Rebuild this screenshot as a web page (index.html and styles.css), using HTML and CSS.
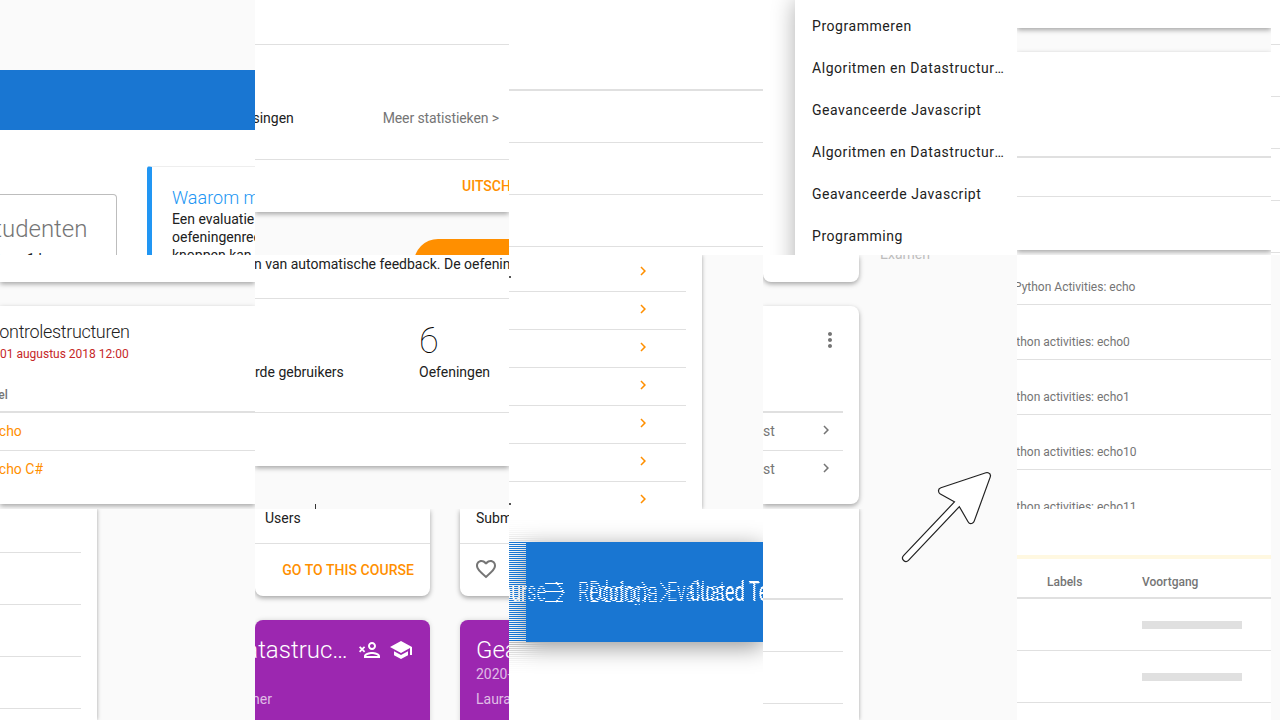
FILE: index.html
```html
<!DOCTYPE html>
<html lang="nl">
<head>
    <meta charset="UTF-8">
    <meta name="viewport" content="width=device-width, initial-scale=1.0">
    <title>Dodona</title>
    <link rel="stylesheet" href="styles.css">
</head>
<body>
<div class="collage">

    <!-- rij 1 -->
    <div class="tile">
        <div class="grey-top"></div>
        <div class="blue-band"></div>
        <div class="intro">
            <div class="outlined">
                <div class="outlined-title">Studenten</div>
                <div class="outlined-text">minstens 1 keer</div>
            </div>
            <div class="callout">
                <h3>Waarom moet ik</h3>
                <p>Een evaluatie<br>oefeningenreeks<br>knoppen kan</p>
            </div>
        </div>
    </div>

    <div class="tile">
        <div class="card stat-card">
            <div class="line-row h45"></div>
            <div class="stat-head">
                <span class="cut-oplos">oplossingen</span>
                <span class="muted more">Meer statistieken &gt;</span>
            </div>
            <div class="stat-foot">UITSCHRIJVEN</div>
        </div>
        <div class="orange-btn"></div>
    </div>

    <div class="tile white">
        <div class="line-row h91 thick"></div>
        <div class="line-row h52"></div>
        <div class="line-row h52"></div>
        <div class="line-row h52"></div>
    </div>

    <div class="tile white">
        <ul class="menu">
            <li>Programmeren</li>
            <li>Algoritmen en Datastructuren</li>
            <li>Geavanceerde Javascript</li>
            <li>Algoritmen en Datastructuren</li>
            <li>Geavanceerde Javascript</li>
            <li>Programming</li>
        </ul>
    </div>

    <div class="tile">
        <div class="card h28"></div>
        <div class="card gap24 h198">
            <div class="line-row h106 thick"></div>
            <div class="line-row h39"></div>
        </div>
    </div>

    <div class="tile white">
        <div class="line-row h45"></div>
        <div class="line-row h52"></div>
        <div class="line-row h52"></div>
        <div class="line-row h52"></div>
        <div class="line-row h52"></div>
    </div>

    <!-- rij 2 -->
    <div class="tile">
        <div class="card h27"></div>
        <div class="card gap24 h198">
            <div class="series-title">Controlestructuren</div>
            <div class="series-date">01 augustus 2018 12:00</div>
            <div class="table-head"><span class="cut-titel">Titel</span></div>
            <div class="table-row orange"><span class="cut-echo">Echo</span></div>
            <div class="table-row orange last"><span class="cut-echo">Echo C#</span></div>
        </div>
    </div>

    <div class="tile">
        <div class="card h211">
            <div class="line-row h44 intro-line">n van automatische feedback. De oefeningen</div>
            <div class="line-row h114 stats">
                <div class="stat-col">rde gebruikers</div>
                <div class="stat-col">
                    <div class="stat-num">6</div>
                    Oefeningen
                </div>
            </div>
        </div>
        <div class="tick"></div>
    </div>

    <div class="tile">
        <div class="side-panel">
            <div class="chev-row first"><span class="dot"></span><svg class="chev" viewBox="0 0 24 24"><path d="M10 6 8.59 7.41 13.17 12l-4.58 4.59L10 18l6-6z"/></svg></div>
            <div class="chev-row"><svg class="chev" viewBox="0 0 24 24"><path d="M10 6 8.59 7.41 13.17 12l-4.58 4.59L10 18l6-6z"/></svg></div>
            <div class="chev-row"><svg class="chev" viewBox="0 0 24 24"><path d="M10 6 8.59 7.41 13.17 12l-4.58 4.59L10 18l6-6z"/></svg></div>
            <div class="chev-row"><svg class="chev" viewBox="0 0 24 24"><path d="M10 6 8.59 7.41 13.17 12l-4.58 4.59L10 18l6-6z"/></svg></div>
            <div class="chev-row"><svg class="chev" viewBox="0 0 24 24"><path d="M10 6 8.59 7.41 13.17 12l-4.58 4.59L10 18l6-6z"/></svg></div>
            <div class="chev-row"><svg class="chev" viewBox="0 0 24 24"><path d="M10 6 8.59 7.41 13.17 12l-4.58 4.59L10 18l6-6z"/></svg></div>
            <div class="chev-row"><span class="dot"></span><svg class="chev" viewBox="0 0 24 24"><path d="M10 6 8.59 7.41 13.17 12l-4.58 4.59L10 18l6-6z"/></svg></div>
        </div>
    </div>

    <div class="tile split">
        <div class="split-left">
            <div class="card round-b h27"></div>
            <div class="card round-r gap24 h198">
                <svg class="kebab" viewBox="0 0 24 24"><path d="M12 8c1.1 0 2-.9 2-2s-.9-2-2-2-2 .9-2 2 .9 2 2 2zm0 2c-1.1 0-2 .9-2 2s.9 2 2 2 2-.9 2-2-.9-2-2-2zm0 6c-1.1 0-2 .9-2 2s.9 2 2 2 2-.9 2-2-.9-2-2-2z"/></svg>
                <div class="mini-table">
                    <div class="mini-row"><span class="cut-test">Test</span><svg class="chev grey" viewBox="0 0 24 24"><path d="M10 6 8.59 7.41 13.17 12l-4.58 4.59L10 18l6-6z"/></svg></div>
                    <div class="mini-row last"><span class="cut-test">Test</span><svg class="chev grey" viewBox="0 0 24 24"><path d="M10 6 8.59 7.41 13.17 12l-4.58 4.59L10 18l6-6z"/></svg></div>
                </div>
            </div>
        </div>
        <div class="exam">Examen</div>
    </div>

    <div class="tile white">
        <div class="py-row h50"><span class="cut-py1">Python Activities: echo</span></div>
        <div class="py-row"><span class="cut-py">Python activities: echo0</span></div>
        <div class="py-row"><span class="cut-py">Python activities: echo1</span></div>
        <div class="py-row"><span class="cut-py">Python activities: echo10</span></div>
        <div class="py-row"><span class="cut-py">Python activities: echo11</span></div>
    </div>

    <div class="tile"></div>

    <!-- rij 3 -->
    <div class="tile">
        <div class="side-panel narrow">
            <div class="line-row h44"></div>
            <div class="line-row h52"></div>
            <div class="line-row h52"></div>
            <div class="line-row h52"></div>
        </div>
    </div>

    <div class="tile">
        <div class="course-grid">
            <div class="course-col">
                <div class="card round-b h87">
                    <div class="course-label">Users</div>
                    <div class="course-foot">GO TO THIS COURSE</div>
                </div>
                <div class="purple">
                    <div class="purple-head">
                        <div class="purple-title">Algoritmen en Datastructuren</div>
                        <svg class="p-icon" viewBox="0 0 24 24"><path d="M15 12c2.21 0 4-1.79 4-4s-1.79-4-4-4-4 1.79-4 4 1.79 4 4 4zm0-6c1.1 0 2 .9 2 2s-.9 2-2 2-2-.9-2-2 .9-2 2-2zm0 8c-2.67 0-8 1.34-8 4v2h16v-2c0-2.66-5.33-4-8-4zm-6 4c.22-.72 3.31-2 6-2 2.7 0 5.8 1.29 6 2H9z"/><path d="M3.2 8.2 2 9.4l1.9 1.9L2 13.2l1.2 1.2 1.9-1.9 1.9 1.9 1.2-1.2-1.9-1.9L8.2 9.4 7 8.2l-1.9 1.9z"/></svg>
                        <svg class="p-icon" viewBox="0 0 24 24"><path d="M5 13.18v4L12 21l7-3.82v-4L12 17l-7-3.82zM12 3 1 9l11 6 9-4.91V17h2V9L12 3z"/></svg>
                    </div>
                    <div class="purple-sub">&nbsp;</div>
                    <div class="purple-sub teacher cut-ner">ner</div>
                </div>
            </div>
            <div class="course-col">
                <div class="card round-b h87">
                    <div class="course-label pad16">Submissions</div>
                    <div class="course-foot left">
                        <svg class="heart" viewBox="0 0 24 24"><path d="M16.5 3c-1.74 0-3.41.81-4.5 2.09C10.91 3.81 9.24 3 7.5 3 4.42 3 2 5.42 2 8.5c0 3.78 3.4 6.86 8.55 11.54L12 21.35l1.45-1.32C18.6 15.36 22 12.28 22 8.5 22 5.42 19.58 3 16.5 3zm-4.4 15.55-.1.1-.1-.1C7.14 14.24 4 11.39 4 8.5 4 6.5 5.5 5 7.5 5c1.54 0 3.04.99 3.57 2.36h1.87C13.46 5.99 14.96 5 16.5 5c2 0 3.5 1.5 3.5 3.5 0 2.89-3.14 5.74-7.9 10.05z"/></svg>
                    </div>
                </div>
                <div class="purple">
                    <div class="purple-head pad16">
                        <div class="purple-title plain">Geavanceerde Javascript</div>
                    </div>
                    <div class="purple-sub pad16">2020-2021</div>
                    <div class="purple-sub teacher pad16">Laura Visser</div>
                </div>
            </div>
        </div>
    </div>

    <div class="tile white">
        <!-- twee halfbeelden door elkaar: even en oneven lijnen -->
        <div class="field field-a">
            <div class="bar bar-a">
                <svg class="bar-menu" viewBox="0 0 18 24"><path d="M0 3h18v1.6H0zM0 11h18v1.6H0zM0 21h18v1.6H0z"/></svg>
                <span class="bar-text dodona">Dodona</span>
                <svg class="bar-chev" viewBox="0 0 12 24"><path d="M2 2 10 12 2 22" /></svg>
                <span class="bar-text closed">Closed Test</span>
                <svg class="bar-chev" viewBox="0 0 12 24"><path d="M2 2 10 12 2 22" /></svg>
            </div>
        </div>
        <div class="field field-b">
            <div class="bar bar-b">
                <span class="bar-text course">Course</span>
                <svg class="bar-chev first-chev" viewBox="0 0 12 24"><path d="M2 2 10 12 2 22" /></svg>
                <span class="bar-text reeks">Redoing</span>
                <svg class="bar-chev" viewBox="0 0 12 24"><path d="M2 2 10 12 2 22" /></svg>
                <span class="bar-text eval">Evaluated Test Course</span>
            </div>
        </div>
    </div>

    <div class="tile">
        <div class="side-panel wide">
            <div class="line-row h91 thick"></div>
            <div class="line-row h52"></div>
            <div class="line-row h52"></div>
        </div>
    </div>

    <div class="tile white">
        <div class="h46"></div>
        <div class="yellow"></div>
        <div class="prog-grid prog-head">
            <span>Labels</span>
            <span>Voortgang</span>
        </div>
        <div class="prog-grid prog-row"><span></span><div class="prog-bar"></div></div>
        <div class="prog-grid prog-row"><span></span><div class="prog-bar"></div></div>
    </div>

    <div class="tile"></div>

    <svg class="arrow" viewBox="895 465 105 105">
        <path class="arrow-out" d="M987 476 L942 491 L960 501 L971 520 Z M960 501 L906 558"/>
        <path class="arrow-in" d="M987 476 L942 491 L960 501 L971 520 Z M960 501 L906 558"/>
    </svg>
</div>
</body>
</html>
```

FILE: styles.css
```css
* {
    box-sizing: border-box;
}

body {
    margin: 0;
    background-color: #fafafa;
    font-family: Roboto, "Liberation Sans", sans-serif;
    font-size: 14px;
    line-height: 18px;
    color: #212121;
    overflow: hidden;
}

.collage {
    position: relative;
    display: grid;
    grid-template-columns: 255px 254px 254px 254px 254px 9px;
    grid-template-rows: 255px 254px 211px;
    width: 1280px;
    height: 720px;
}

.tile {
    position: relative;
    overflow: hidden;
    background-color: #fafafa;
    white-space: nowrap;
}

.white {
    background-color: #ffffff;
}

.card {
    background-color: #ffffff;
    box-shadow: 0 2px 5px rgba(0, 0, 0, 0.35);
}

.round-b {
    border-radius: 0 0 8px 8px;
}

.round-r {
    border-radius: 0 8px 8px 0;
}

.gap24 {
    margin-top: 24px;
}

.h27 { height: 27px; }
.h28 { height: 28px; }
.h39 { height: 39px; }
.h44 { height: 44px; }
.h45 { height: 45px; }
.h46 { height: 46px; }
.h52 { height: 52px; }
.h87 { height: 87px; }
.h91 { height: 91px; }
.h106 { height: 106px; }
.h114 { height: 114px; }
.h198 { height: 198px; }
.h211 { height: 211px; }

.line-row {
    border-bottom: 1px solid #e0e0e0;
}

.thick {
    border-bottom-width: 2px;
}

.muted {
    color: #757575;
}

.more {
    letter-spacing: -0.1px;
}

.orange {
    color: #ff8f00;
}

/* intro */
.grey-top {
    height: 70px;
}

.blue-band {
    height: 60px;
    background-color: #1976d2;
}

.intro {
    display: flex;
    height: 125px;
    background-color: #ffffff;
}

.outlined {
    flex: none;
    width: 117px;
    height: 80px;
    margin-top: 64px;
    padding-top: 19px;
    border: 1px solid #bdbdbd;
    border-left: 0;
    border-radius: 0 4px 4px 0;
    overflow: hidden;
}

.outlined-title {
    margin-left: -20px;
    font-size: 24px;
    font-weight: 300;
    line-height: 30px;
    color: #757575;
}

.outlined-text {
    margin-top: 6px;
    margin-left: -34px;
}

.callout {
    flex: none;
    width: 200px;
    margin-top: 36px;
    margin-left: 30px;
    padding: 20px 0 0 20px;
    border-left: 5px solid #2196f3;
    border-top: 1px solid #eeeeee;
    border-radius: 3px 0 0 0;
}

.callout h3 {
    margin: 0;
    font-size: 18px;
    font-weight: 300;
    line-height: 22px;
    color: #2196f3;
}

.callout p {
    margin: 1px 0 0;
}

/* statistieken */
.stat-card {
    height: 212px;
}

.stat-head {
    display: flex;
    justify-content: space-between;
    align-items: center;
    height: 115px;
    padding-right: 10px;
    padding-top: 32px;
    border-bottom: 1px solid #e0e0e0;
}

.cut-oplos {
    margin-left: -37px;
}

.stat-foot {
    padding: 17px 0 0 207px;
    font-weight: 500;
    color: #ff8f00;
}

.orange-btn {
    height: 40px;
    margin: 27px 0 0 159px;
    border-radius: 24px 0 0 0;
    background-color: #ff8f00;
}

/* menu */
.menu {
    width: 222px;
    height: 280px;
    margin: 0 0 0 32px;
    padding: 5px 0 0;
    list-style: none;
    background-color: #ffffff;
    box-shadow: 0 0 22px rgba(0, 0, 0, 0.32);
}

.menu li {
    height: 42px;
    padding: 12px 12px 0 17px;
    letter-spacing: 0.55px;
    overflow: hidden;
    text-overflow: ellipsis;
}

/* oefeningenreeks */
.series-title {
    margin-left: -12px;
    padding-top: 15px;
    font-size: 18px;
    font-weight: 300;
    letter-spacing: -0.35px;
    line-height: 22px;
}

.series-date {
    margin-top: 3px;
    font-size: 12px;
    line-height: 16px;
    color: #c62828;
}

.table-head {
    height: 51px;
    padding-top: 25px;
    border-bottom: 2px solid #e0e0e0;
    font-size: 12px;
    font-weight: 500;
    line-height: 16px;
    color: #757575;
}

.cut-titel {
    margin-left: -16px;
}

.table-row {
    height: 38px;
    padding-top: 9px;
    border-bottom: 1px solid #e0e0e0;
}

.table-row.last {
    border-bottom: 0;
}

.cut-echo {
    display: block;
    margin-left: -9px;
}

/* gebruikers en oefeningen */
.intro-line {
    margin-left: -1px;
}

.stats {
    display: flex;
    align-items: flex-end;
    padding-bottom: 31px;
}

.stat-col {
    flex: none;
    width: 164px;
}

.stat-num {
    margin-bottom: 2px;
    font-size: 36px;
    font-weight: 100;
    line-height: 40px;
    color: #000000;
}

.tick {
    width: 1px;
    height: 5px;
    margin: 38px 0 0 60px;
    background-color: #333333;
}

/* zijpaneel */
.side-panel {
    width: 193px;
    height: 100%;
    background-color: #ffffff;
    box-shadow: 0 0 4px rgba(0, 0, 0, 0.35);
}

.chev-row {
    display: flex;
    align-items: center;
    width: 177px;
    height: 38px;
    padding-left: 125px;
    border-bottom: 1px solid #e0e0e0;
}

.chev-row.first {
    height: 37px;
}

.chev {
    flex: none;
    width: 18px;
    height: 18px;
    margin-top: -4px;
    fill: #ff8f00;
}

.chev.grey {
    margin-top: -2px;
    fill: #757575;
}

.dot {
    margin: 7px 123px 0 -125px;
    width: 2px;
    height: 2px;
    background-color: #555555;
}

.side-panel.narrow {
    width: 97px;
    padding-right: 16px;
}

.side-panel.wide {
    width: 96px;
    padding-right: 16px;
}

/* kaart met test */
.split {
    display: flex;
}

.split-left {
    flex: none;
    width: 96px;
}

.kebab {
    display: block;
    width: 24px;
    height: 24px;
    margin-left: 55px;
    position: relative;
    top: 22px;
    fill: #757575;
}

.mini-table {
    width: 80px;
    height: 79px;
    margin-top: 81px;
    border-top: 2px solid #e0e0e0;
    overflow: hidden;
}

.mini-row {
    display: flex;
    justify-content: space-between;
    align-items: center;
    height: 38px;
    padding-right: 8px;
    padding-bottom: 2px;
    border-bottom: 1px solid #e0e0e0;
    color: #757575;
}

.mini-row.last {
    border-bottom: 0;
}

.cut-test {
    margin-left: -15px;
}

.exam {
    margin: -10px 0 0 21px;
    color: #bdbdbd;
}

/* oefeningenlijst */
.py-row {
    display: flex;
    align-items: flex-end;
    height: 55px;
    padding-bottom: 9px;
    border-bottom: 1px solid #e0e0e0;
    font-size: 12px;
    line-height: 16px;
    color: #757575;
}

.py-row.h50 {
    height: 50px;
}

.cut-py1 {
    margin-left: -3px;
}

.cut-py {
    margin-left: -14px;
}

/* cursussen */
.course-grid {
    display: flex;
    gap: 30px;
}

.course-col {
    flex: none;
    width: 175px;
}

.course-label {
    height: 35px;
    padding-left: 10px;
    border-bottom: 1px solid #e0e0e0;
}

.course-label.pad16 {
    padding-left: 16px;
}

.course-foot {
    padding: 17px 16px 0 0;
    text-align: right;
    font-weight: 500;
    letter-spacing: 0.05px;
    color: #ff8f00;
}

.course-foot.left {
    padding: 13px 0 0 14px;
    text-align: left;
}

.heart {
    display: block;
    width: 24px;
    height: 24px;
    fill: #757575;
}

.purple {
    height: 120px;
    margin-top: 24px;
    border-radius: 8px 8px 0 0;
    background-color: #9c27b0;
    box-shadow: 0 0 5px rgba(0, 0, 0, 0.15);
    color: #ffffff;
}

.purple-head {
    display: flex;
    align-items: center;
    padding: 16px 16px 0 0;
}

.purple-head.pad16 {
    padding-left: 16px;
}

.purple-title {
    flex: none;
    width: 271px;
    margin-left: -178px;
    margin-right: 9px;
    font-size: 24px;
    font-weight: 300;
    line-height: 28px;
    overflow: hidden;
    text-overflow: ellipsis;
}

.purple-title.plain {
    width: auto;
    margin: 0;
}

.p-icon {
    flex: none;
    width: 24px;
    height: 24px;
    margin-right: 8px;
    fill: #ffffff;
}

.p-icon:last-child {
    margin-right: 0;
}

.purple-sub {
    line-height: 20px;
    color: rgba(255, 255, 255, 0.7);
}

.purple-sub.pad16 {
    padding-left: 16px;
}

.teacher {
    margin-top: 5px;
}

.cut-ner {
    margin-left: -3px;
}

/* blauwe balk, twee velden in elkaar geschoven */
.field {
    position: absolute;
    top: 0;
    left: 0;
    width: 100%;
    height: 100%;
    padding-top: 33px;
    background-color: #ffffff;
}

.field-a {
    -webkit-mask-image: repeating-linear-gradient(#000 0 1px, transparent 1px 2px);
    mask-image: repeating-linear-gradient(#000 0 1px, transparent 1px 2px);
}

.field-b {
    -webkit-mask-image: repeating-linear-gradient(transparent 0 1px, #000 1px 2px);
    mask-image: repeating-linear-gradient(transparent 0 1px, #000 1px 2px);
}

.bar {
    display: flex;
    align-items: center;
    height: 100px;
    background-color: #1976d2;
    box-shadow: 0 5px 22px rgba(0, 0, 0, 0.42);
    color: #ffffff;
}

.bar-a {
    margin-left: 17px;
    padding-left: 19px;
}

.bar-b {
    margin-left: -40px;
}

.bar-text {
    flex: none;
    font-size: 18px;
    font-weight: 400;
    transform: scaleY(1.55);
}

.bar-menu {
    flex: none;
    width: 18px;
    height: 24px;
    fill: #ffffff;
}

.bar-chev {
    flex: none;
    width: 12px;
    height: 24px;
    fill: none;
    stroke: #ffffff;
    stroke-width: 1.6;
}

.first-chev {
    margin-left: 8px;
}

.dodona {
    margin-left: 26px;
    font-size: 20px;
}

.closed {
    margin-left: 19px;
    margin-right: 4px;
}

.course {
    width: 77px;
    text-align: right;
}

.reeks {
    margin-left: 12px;
    width: 62px;
    overflow: hidden;
}

.eval {
    margin-left: 15px;
}

/* voortgang */
.yellow {
    height: 4px;
    background-color: #fff8e1;
}

.prog-grid {
    display: grid;
    grid-template-columns: 95px 1fr;
    padding-left: 30px;
}

.prog-head {
    height: 40px;
    padding-top: 15px;
    border-bottom: 2px solid #e0e0e0;
    font-size: 12px;
    font-weight: 500;
    line-height: 16px;
    color: #757575;
}

.prog-row {
    align-items: center;
    height: 52px;
    border-bottom: 1px solid #e0e0e0;
}

.prog-bar {
    width: 100px;
    height: 8px;
    background-color: #e0e0e0;
}

/* pijl */
.arrow {
    position: absolute;
    left: 895px;
    top: 465px;
    width: 105px;
    height: 105px;
}

.arrow-out,
.arrow-in {
    fill: #ffffff;
    stroke-linejoin: round;
    stroke-linecap: round;
}

.arrow-out {
    stroke: #222222;
    stroke-width: 8px;
}

.arrow-in {
    stroke: #ffffff;
    stroke-width: 5.6px;
}
```
